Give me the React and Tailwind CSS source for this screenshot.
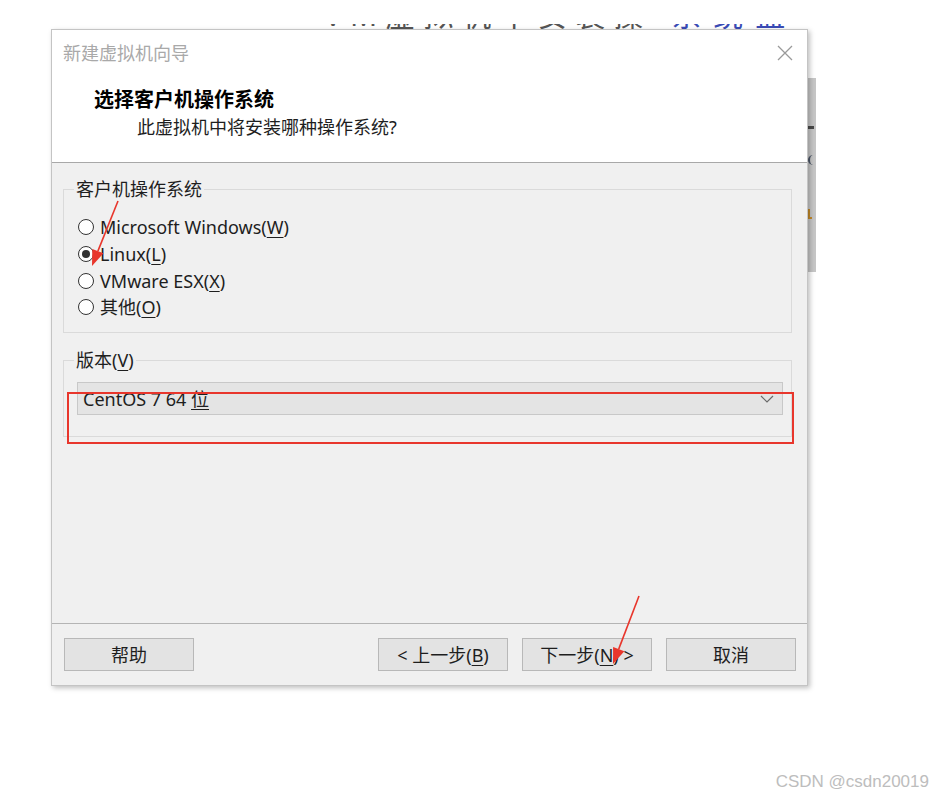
import React from "react";

const font = { fontFamily: '"Noto Sans", "Noto Sans CJK SC", sans-serif' };

// Radio button in the Windows style
const Radio = ({ checked, children }) => (
  <div className="flex h-[26.7px] items-center">
    <span className="ml-[14px] flex h-[16px] w-[16px] items-center justify-center rounded-full border border-[#333333] bg-white">
      {checked && <span className="h-[8px] w-[8px] rounded-full bg-[#333333]" />}
    </span>
    <span className="ml-[6px] text-[18px] leading-none text-[#1e1e1e]">{children}</span>
  </div>
);

const Key = ({ children }) => <u className="underline-offset-[3px]">{children}</u>;

const Button = ({ children, className = "" }) => (
  <button
    className={
      "flex h-[33px] w-[130px] items-center justify-center border border-[#b8b8b8] bg-[#e3e3e3] text-[18px] leading-none text-[#1e1e1e] " +
      className
    }
  >
    {children}
  </button>
);

const App = () => {
  return (
    <div className="relative h-[796px] w-[933px] overflow-hidden bg-white" style={font}>
      {/* page behind the dialog: only the bottoms of its heading show */}
      <div className="absolute left-[324px] top-0 flex w-[484px] whitespace-nowrap text-[30px] leading-[30px] text-[#555555] [clip-path:inset(24px_0_0_0)]">
        <span className="tracking-[8px]">VM虚拟机中安装操</span>
        <span className="ml-[20px] tracking-[12px] text-[#3a4bb5]">系统盘</span>
      </div>
      <div className="absolute left-[808px] top-[78px] flex h-[194px] w-[8px] flex-col bg-[#c6c6c6]">
        <span className="mt-[48px] h-[3px] w-[6px] bg-[#4a4a4a]" />
        <span className="mt-[26px] h-[10px] w-[6px] rounded-l-full border-l-2 border-[#4a5566]" />
        <span className="mt-[44px] h-[10px] w-[4px] border-b-2 border-l-2 border-[#c48a2a]" />
      </div>

      {/* dialog */}
      <div className="relative z-10 ml-[51px] mt-[29px] flex h-[657px] w-[757px] flex-col border border-[#c4c4c4] bg-[#f0f0f0] shadow-[2px_2px_5px_rgba(0,0,0,0.25)]">
        {/* header */}
        <div className="h-[133px] border-b border-[#a8a8a8] bg-white">
          <div className="flex h-[45px] items-center justify-between pl-[11px] pr-[14px]">
            <span className="text-[18px] leading-none text-[#a9a9a9]">新建虚拟机向导</span>
            <svg width="16" height="16" viewBox="0 0 16 16" className="mt-[1px]">
              <path d="M1 1L15 15M15 1L1 15" stroke="#9a9a9a" strokeWidth="1.3" fill="none" />
            </svg>
          </div>
          <div className="ml-[42px] mt-[12px] text-[20px] font-bold leading-[26px] text-black">
            选择客户机操作系统
          </div>
          <div className="ml-[85px] mt-[1px] text-[18px] leading-[26px] text-[#1e1e1e]">
            此虚拟机中将安装哪种操作系统?
          </div>
        </div>

        {/* body */}
        <div className="flex-1 pl-[11px] pr-[15px] pt-[14px]">
          <fieldset className="h-[156px] border border-[#dadada]">
            <legend className="ml-[10px] px-[2px] text-[18px] leading-[24px] text-[#1e1e1e]">
              客户机操作系统
            </legend>
            <div className="flex flex-col pt-[13px]">
              <Radio>
                Microsoft Windows(<Key>W</Key>)
              </Radio>
              <Radio checked>
                Linux(<Key>L</Key>)
              </Radio>
              <Radio>
                VMware ESX(<Key>X</Key>)
              </Radio>
              <Radio>
                其他(<Key>O</Key>)
              </Radio>
            </div>
          </fieldset>

          <fieldset className="mt-[15px] h-[89px] border border-[#dadada] pl-[13px] pr-[8px]">
            <legend className="-ml-[3px] px-[2px] text-[18px] leading-[24px] text-[#1e1e1e]">
              版本(<Key>V</Key>)
            </legend>
            <div className="mt-[10px] flex h-[33px] items-center justify-between border border-[#c8c8c8] bg-[#e4e4e4] pl-[5px] pr-[8px]">
              <span className="text-[18px] leading-none text-[#1e1e1e]">
                CentOS 7 64 <Key>位</Key>
              </span>
              <svg width="14" height="10" viewBox="0 0 14 10">
                <path d="M1 2L7 8L13 2" stroke="#6a6a6a" strokeWidth="1.2" fill="none" />
              </svg>
            </div>
          </fieldset>
        </div>

        {/* footer */}
        <div className="flex h-[62px] items-center border-t border-[#b4b4b4] pl-[12px] pr-[11px]">
          <Button>帮助</Button>
          <div className="ml-auto flex gap-[14px]">
            <Button>
              &lt; 上一步(<Key>B</Key>)
            </Button>
            <Button>
              下一步(<Key>N</Key>) &gt;
            </Button>
            <Button>取消</Button>
          </div>
        </div>
      </div>

      {/* annotations */}
      <div className="absolute left-[67px] top-[392px] z-20 h-[52px] w-[727px] border-2 border-[#e8362c]" />
      <svg className="pointer-events-none absolute left-0 top-0 z-30" width="933" height="796">
        <line x1="118" y1="201" x2="97.9" y2="251.1" stroke="#e8362c" strokeWidth="1.6" />
        <polygon points="92,266 103.5,253.3 92.3,248.9" fill="#e8362c" />
        <line x1="639" y1="596" x2="618.7" y2="649.1" stroke="#e8362c" strokeWidth="1.6" />
        <polygon points="613,664 624.3,651.2 613.1,647" fill="#e8362c" />
      </svg>

      <div
        className="absolute bottom-[6px] right-[4px] text-[17px] leading-none text-[#bdbdbd]"
        style={{ fontFamily: '"Liberation Sans", Arial, sans-serif' }}
      >
        CSDN @csdn20019
      </div>
    </div>
  );
};

export default App;
